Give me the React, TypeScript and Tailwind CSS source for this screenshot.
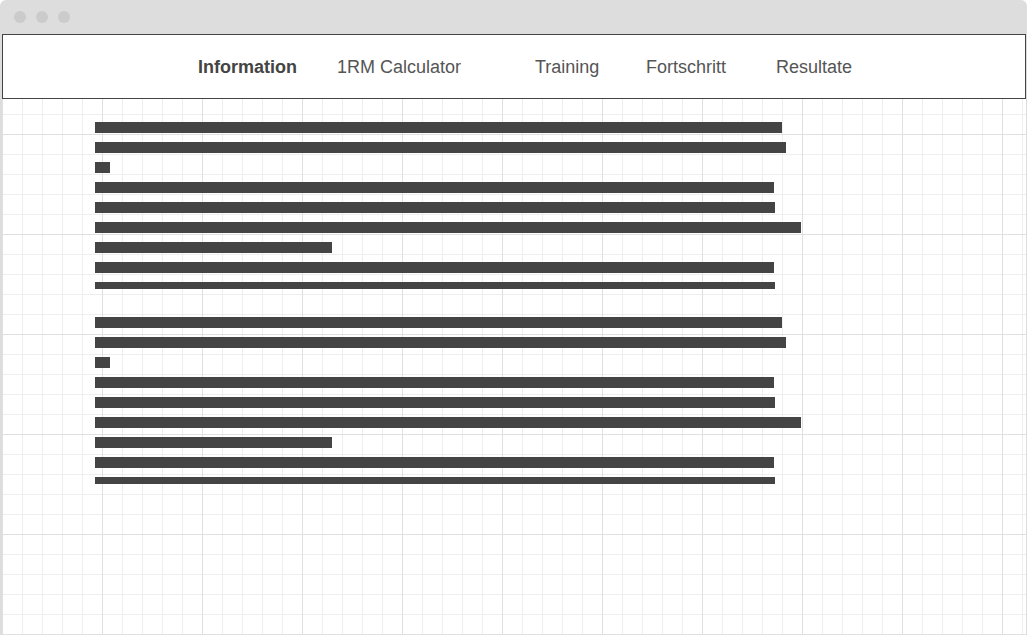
const navItems = [
  { label: "Information", width: "w-[139px]", bold: true },
  { label: "1RM Calculator", width: "w-[198px]", bold: false },
  { label: "Training", width: "w-[111px]", bold: false },
  { label: "Fortschritt", width: "w-[130px]", bold: false },
  { label: "Resultate", width: "w-auto", bold: false },
];

// placeholder text lines, widths in px
const lines = [687, 691, 15, 679, 680, 706, 237, 679, 680];

function Paragraph() {
  return (
    <div className="flex flex-col">
      {lines.map((w, i) => (
        <div key={i} className="h-[20px]">
          <div
            className={i === lines.length - 1 ? "h-[7px] bg-[#444]" : "h-[11px] bg-[#444]"}
            style={{ width: w }}
          />
        </div>
      ))}
    </div>
  );
}

export default function App() {
  return (
    <div className="flex h-[635px] w-[1027px] flex-col overflow-hidden rounded-t-[6px] bg-[#dddddd] font-['Liberation_Sans',Arial,sans-serif]">
      {/* ─── Window chrome ─────────────────────────────────── */}
      <div className="flex h-[34px] shrink-0 items-center gap-[10px] pl-[14px]">
        <span className="block h-[12px] w-[12px] rounded-full bg-[#cbcbcb]" />
        <span className="block h-[12px] w-[12px] rounded-full bg-[#cbcbcb]" />
        <span className="block h-[12px] w-[12px] rounded-full bg-[#cbcbcb]" />
      </div>

      {/* ─── Page ──────────────────────────────────────────── */}
      <div className="ml-[2px] mr-[1px] flex-1 bg-white [background-image:linear-gradient(to_right,#e0e0e0_1px,transparent_1px),linear-gradient(to_bottom,#e0e0e0_1px,transparent_1px),linear-gradient(to_right,#eeeeee_1px,transparent_1px),linear-gradient(to_bottom,#eeeeee_1px,transparent_1px)] [background-size:100px_100px,100px_100px,20px_20px,20px_20px]">
        <nav className="flex h-[65px] items-center border border-[#444] bg-white pl-[195px] pt-[2px]">
          {navItems.map((n) => (
            <span
              key={n.label}
              className={`${n.width} shrink-0 whitespace-nowrap text-[18px] ${
                n.bold ? "font-bold text-[#444]" : "text-[#555]"
              }`}
            >
              {n.label}
            </span>
          ))}
        </nav>

        <div className="flex flex-col gap-[15px] pl-[93px] pt-[23px]">
          <Paragraph />
          <Paragraph />
        </div>
      </div>
    </div>
  );
}
